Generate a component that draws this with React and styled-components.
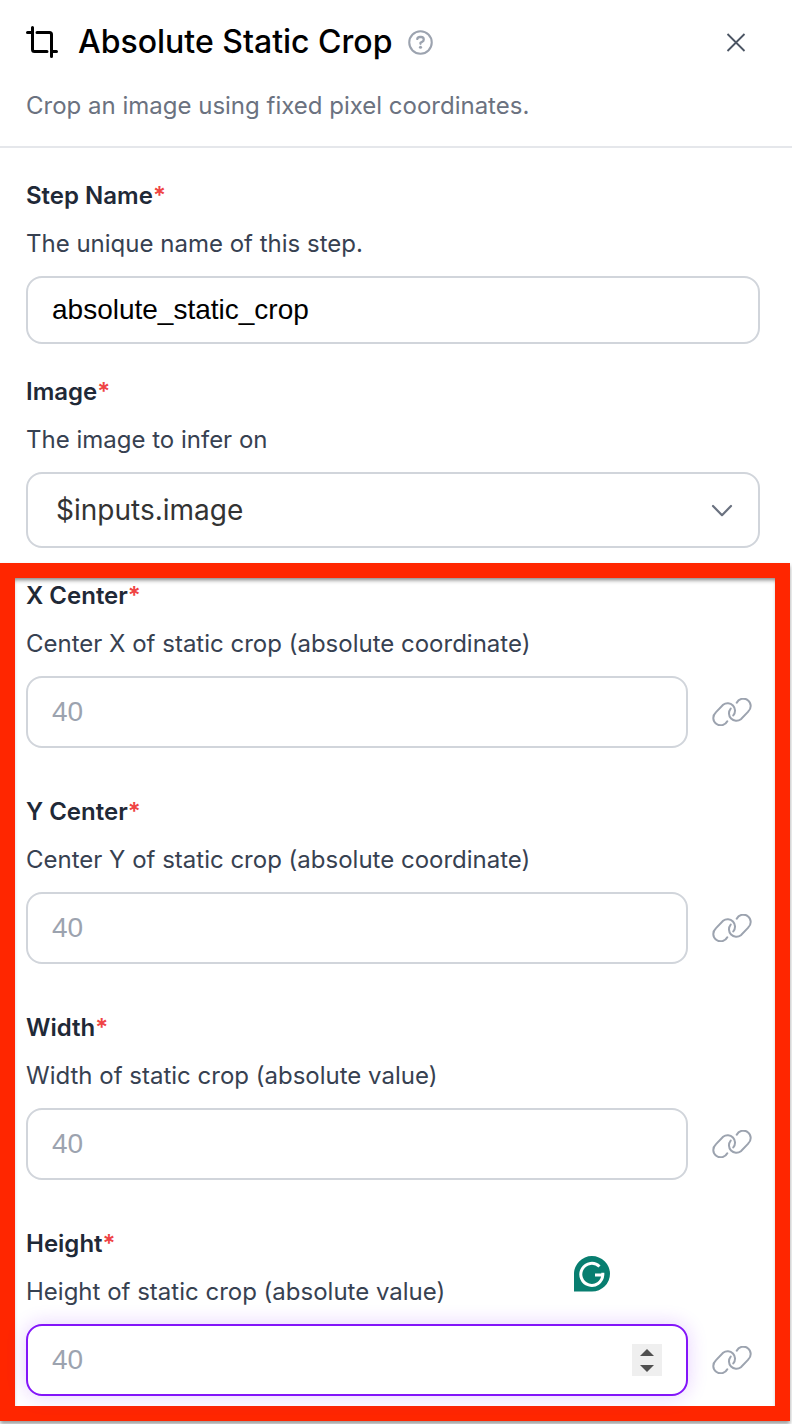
import React, { useState } from 'react';
import styled, { createGlobalStyle } from 'styled-components';

const cropFields = [
  { id: 'x_center', label: 'X Center', hint: 'Center X of static crop (absolute coordinate)' },
  { id: 'y_center', label: 'Y Center', hint: 'Center Y of static crop (absolute coordinate)' },
  { id: 'width', label: 'Width', hint: 'Width of static crop (absolute value)' },
  { id: 'height', label: 'Height', hint: 'Height of static crop (absolute value)', active: true },
];

const CropIcon = () => (
  <svg width="32" height="32" viewBox="0 0 32 32" fill="none" stroke="#000" strokeWidth="3" strokeLinecap="round" aria-hidden="true">
    <path d="M1.5 6.5H6.500M6.5 1.5V23.5a2 2 0 0 0 2 2H21M11 6.500H23.5a2 2 0 0 1 2 2V30.5M25.500 25.5H30.5" />
  </svg>
);

const HelpIcon = () => (
  <svg width="25" height="25" viewBox="0 0 24 24" fill="none" stroke="#9ca3af" strokeWidth="2" strokeLinecap="round" strokeLinejoin="round" aria-hidden="true">
    <circle cx="12" cy="12" r="10.800" />
    <path d="M8.9 8.6c.3-1.3 1.3-1.9 2.6-1.9h1c1.500 0 2.600 1 2.600 2.400 0 1-.5 1.700-1.400 2.200L12 12.300v.9" strokeWidth="2.200" />
    <circle cx="12" cy="16.600" r="1.500" fill="#9ca3af" stroke="none" />
  </svg>
);

const CloseIcon = () => (
  <svg width="20" height="20" viewBox="0 0 20 20" fill="none" stroke="#4b5563" strokeWidth="1.800" aria-hidden="true">
    <path d="M1.500 2 18.500 19M18.500 2 1.500 19" />
  </svg>
);

const ChevronIcon = () => (
  <svg width="22" height="14" viewBox="0 0 22 14" fill="none" stroke="#6b7280" strokeWidth="2.200" strokeLinecap="round" strokeLinejoin="round" aria-hidden="true">
    <path d="M2 3 11 12.200 20 3" />
  </svg>
);

const LinkIcon = () => (
  <svg width="40" height="28" viewBox="0 0 40 28" fill="none" stroke="#9ca3af" strokeWidth="2" strokeLinecap="round" aria-hidden="true">
    <path d="M15.300 23.300A7.400 7.400 0 1 1 3.800 14.400L11.100 6.800A7.400 7.400 0 0 1 21.300 17.400" />
    <path d="M24.700 4.700A7.400 7.400 0 1 1 36.200 13.600L28.900 21.200A7.400 7.400 0 0 1 18.700 10.600" />
  </svg>
);

const AssistantIcon = () => (
  <svg width="36" height="36" viewBox="0 0 36 36" fill="none" aria-hidden="true">
    <path d="M0 35.500V18A18 17.700 0 1 1 18 35.500Z" fill="#087e70" />
    <path d="M25.500 10.500A11 11 0 1 0 28.800 19H21M28.800 19V16.800" stroke="#fff" strokeWidth="3" />
  </svg>
);

const FieldText = ({ id, label, hint }) => (
  <>
    <Label htmlFor={id}>
      {label}
      <Required>*</Required>
    </Label>
    <Hint>{hint}</Hint>
  </>
);

const NumberField = ({ id, label, hint, active }) => {
  const [value, setValue] = useState('');
  const step = (amount) => setValue(String(Number(value) + amount));

  return (
    <Field>
      <FieldText id={id} label={label} hint={hint} />
      <InputRow>
        <InputShell $active={active}>
          <NumberInput
            id={id}
            type="number"
            placeholder="40"
            value={value}
            onChange={(event) => setValue(event.target.value)}
          />
          {active && (
            <Spinner>
              <SpinButton aria-label="Increase" onClick={() => step(1)}>
                <svg width="14" height="7" viewBox="0 0 14 7"><path d="M7 0 14 7H0Z" fill="#505050" /></svg>
              </SpinButton>
              <SpinButton aria-label="Decrease" onClick={() => step(-1)}>
                <svg width="14" height="7" viewBox="0 0 14 7"><path d="M0 0H14L7 7Z" fill="#505050" /></svg>
              </SpinButton>
            </Spinner>
          )}
        </InputShell>
        <LinkButton aria-label={`Link ${label}`}>
          <LinkIcon />
        </LinkButton>
      </InputRow>
      {active && (
        <AssistantBadge aria-label="Writing assistant">
          <AssistantIcon />
        </AssistantBadge>
      )}
    </Field>
  );
};

const App = () => {
  const [stepName, setStepName] = useState('absolute_static_crop');

  return (
    <Panel>
      <GlobalStyle />
      <Header>
        <TitleRow>
          <CropIcon />
          <Title>Absolute Static Crop</Title>
          <IconButton aria-label="Help">
            <HelpIcon />
          </IconButton>
          <CloseButton aria-label="Close">
            <CloseIcon />
          </CloseButton>
        </TitleRow>
        <Description>Crop an image using fixed pixel coordinates.</Description>
      </Header>

      <Fields>
        <Field>
          <FieldText id="step_name" label="Step Name" hint="The unique name of this step." />
          <NameInput
            id="step_name"
            type="text"
            value={stepName}
            onChange={(event) => setStepName(event.target.value)}
          />
        </Field>
        <Field>
          <FieldText id="image" label="Image" hint="The image to infer on" />
          <SelectWrap>
            <Select id="image">
              <option>$inputs.image</option>
            </Select>
            <SelectArrow>
              <ChevronIcon />
            </SelectArrow>
          </SelectWrap>
        </Field>
      </Fields>

      <Highlight>
        {cropFields.map((field) => (
          <NumberField key={field.id} {...field} />
        ))}
      </Highlight>
    </Panel>
  );
};

export default App;

// Styled Components
const GlobalStyle = createGlobalStyle`
  * {
    box-sizing: border-box;
  }

  body {
    margin: 0;
    background: #ffffff;
    font-family: 'Inter', sans-serif;
  }

  svg {
    display: block;
    flex-shrink: 0;
  }
`;

const Panel = styled.main`
  padding-bottom: 3px;
  overflow: hidden;
`;

const Header = styled.header`
  display: flex;
  flex-direction: column;
  gap: 28px;
  padding: 22px 32px 24px 26px;
  border-bottom: 2px solid #e5e7eb;
`;

const TitleRow = styled.div`
  display: flex;
  align-items: center;
`;

const Title = styled.h1`
  margin: 0 16px 0 20px;
  font-size: 32px;
  line-height: 40px;
  font-weight: 500;
  color: #000000;
`;

const IconButton = styled.button`
  padding: 0;
  border: none;
  background: none;
  cursor: pointer;
`;

const CloseButton = styled(IconButton)`
  margin-left: auto;
  padding: 8px 14px;
`;

const Description = styled.p`
  margin: 0;
  font-size: 24px;
  line-height: 32px;
  color: #6b7280;
`;

const Fields = styled.section`
  display: flex;
  flex-direction: column;
  gap: 32px;
  padding: 32px 32px 15px 26px;
`;

const Field = styled.div`
  position: relative;
  display: flex;
  flex-direction: column;
  gap: 16px;
`;

const Label = styled.label`
  font-size: 24px;
  line-height: 32px;
  font-weight: 600;
  color: #1f2937;
`;

const Required = styled.span`
  color: #ef4444;
`;

const Hint = styled.p`
  margin: 0;
  font-size: 24px;
  line-height: 32px;
  color: #374151;
`;

const NameInput = styled.input`
  width: 100%;
  height: 68px;
  padding: 0 24px;
  border: 2px solid #d1d5db;
  border-radius: 16px;
  font-family: 'Liberation Sans', sans-serif;
  font-size: 28px;
  color: #000000;
  outline: none;
`;

const SelectWrap = styled.div`
  position: relative;
`;

const Select = styled.select`
  display: block;
  width: 100%;
  height: 76px;
  padding: 0 64px 0 28px;
  border: 2px solid #d1d5db;
  border-radius: 16px;
  appearance: none;
  background: #ffffff;
  font-family: 'Inter', sans-serif;
  font-size: 28px;
  color: #333333;
`;

const SelectArrow = styled.span`
  position: absolute;
  top: 0;
  right: 27px;
  bottom: 0;
  display: flex;
  align-items: center;
  pointer-events: none;
`;

const Highlight = styled.section`
  display: flex;
  flex-direction: column;
  gap: 48px;
  margin-right: 2px;
  padding: 2px 15px 10px 11px;
  border: 15px solid #ff2600;
  box-shadow: 0 3px 4px rgba(0, 0, 0, 0.4), inset 0 4px 4px -2px rgba(0, 0, 0, 0.5);
`;

const InputRow = styled.div`
  display: flex;
  align-items: center;
  gap: 16px;
`;

const InputShell = styled.div`
  flex: 1;
  display: flex;
  align-items: center;
  height: 72px;
  padding: 0 24px;
  border: 2px solid ${({ $active }) => ($active ? '#8315f9' : '#d1d5db')};
  border-radius: 16px;
  background: #ffffff;
  box-shadow: ${({ $active }) => ($active ? '0 0 20px rgba(131, 21, 249, 0.2)' : 'none')};
`;

const NumberInput = styled.input`
  flex: 1;
  min-width: 0;
  padding: 0;
  border: none;
  outline: none;
  background: none;
  appearance: textfield;
  font-family: 'Liberation Sans', sans-serif;
  font-size: 28px;
  color: #000000;

  &::placeholder {
    color: #9ca3af;
  }
`;

const Spinner = styled.div`
  display: flex;
  flex-direction: column;
  width: 30px;
  height: 32px;
  background: #efefef;
`;

const SpinButton = styled.button`
  flex: 1;
  display: flex;
  align-items: center;
  justify-content: center;
  padding: 0;
  border: none;
  background: none;
`;

const LinkButton = styled(IconButton)`
  display: flex;
  align-items: center;
  justify-content: center;
  width: 56px;
  height: 56px;
`;

const AssistantBadge = styled(IconButton)`
  position: absolute;
  top: 28px;
  right: 150px;
`;
